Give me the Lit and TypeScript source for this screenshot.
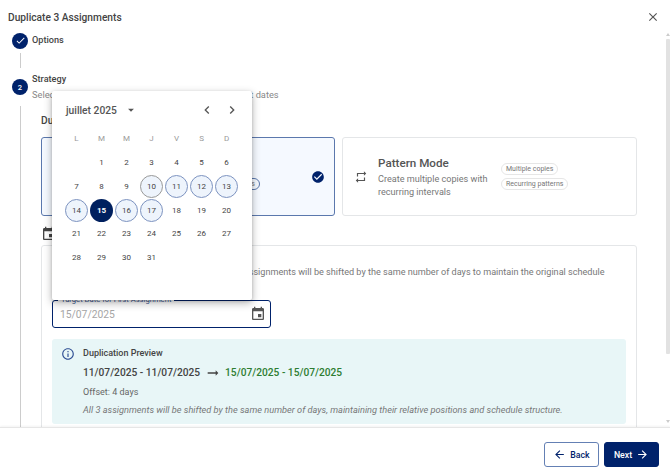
import { LitElement, html, css, svg } from "lit";
import { customElement } from "lit/decorators.js";

const P = {
  checkCircle: "M12 2C6.48 2 2 6.48 2 12s4.48 10 10 10 10-4.48 10-10S17.52 2 12 2zm-2 15-5-5 1.41-1.41L10 14.17l7.59-7.59L19 8l-9 9z",
  close: "M19 6.41 17.59 5 12 10.59 6.41 5 5 6.41 10.59 12 5 17.59 6.41 19 12 13.41 17.59 19 19 17.59 13.41 12z",
  repeat: "M7 7h10v3l4-4-4-4v3H5v6h2V7zm10 10H7v-3l-4 4 4 4v-3h12v-6h-2v4z",
  event: "M17 12h-5v5h5v-5zM16 1v2H8V1H6v2H5c-1.11 0-1.99.9-1.99 2L3 19c0 1.1.89 2 2 2h14c1.1 0 2-.9 2-2V5c0-1.1-.9-2-2-2h-1V1h-2zm3 18H5V8h14v11z",
  drop: "M7 10l5 5 5-5z",
  left: "M15.41 7.41 14 6l-6 6 6 6 1.41-1.41L10.83 12z",
  right: "M10 6 8.59 7.41 13.17 12l-4.58 4.59L10 18l6-6z",
  info: "M11 7h2v2h-2zm0 4h2v6h-2zm1-9C6.48 2 2 6.48 2 12s4.48 10 10 10 10-4.48 10-10S17.52 2 12 2zm0 18c-4.41 0-8-3.59-8-8s3.59-8 8-8 8 3.59 8 8-3.59 8-8 8z",
  back: "M20 11H7.83l5.59-5.59L12 4l-8 8 8 8 1.41-1.41L7.83 13H20v-2z",
  fwd: "M12 4l-1.41 1.41L16.17 11H4v2h12.17l-5.58 5.59L12 20l8-8z",
  alt: "M16.01 11H4v2h12.01v3L20 12l-3.99-4z",
  check: "M9 16.17 4.83 12l-1.42 1.41L9 19 21 7l-1.41-1.41z",
};

const icon = (d: string, size: number, color: string) => html`<svg
  class="ic" width=${size} height=${size} viewBox="0 0 24 24" fill=${color}>${svg`<path d=${d}></path>`}</svg>`;

const NAVY = "#00226b";
const weeks: number[][] = [
  [0, 1, 2, 3, 4, 5, 6],
  [7, 8, 9, 10, 11, 12, 13],
  [14, 15, 16, 17, 18, 19, 20],
  [21, 22, 23, 24, 25, 26, 27],
  [28, 29, 30, 31, 0, 0, 0],
];
const dayClass = (d: number) => {
  if (d === 15) return "day sel";
  if (d === 10) return "day today";
  if (d >= 11 && d <= 17) return "day range";
  return "day";
};

@customElement("app-root")
export class AppRoot extends LitElement {
  static styles = css`
    :host {
      display: flex;
      flex-direction: column;
      width: 670px;
      height: 474px;
      overflow: hidden;
      position: relative;
      background: #fff;
      font-family: Roboto, "Liberation Sans", sans-serif;
      color: #444;
    }
    .ic { display: block; flex: none; }
    .head {
      flex: none;
      height: 33px;
      display: flex;
      align-items: center;
      justify-content: space-between;
      padding: 1px 10px 0 8px;
      box-sizing: border-box;
    }
    .title { font-size: 10.2px; font-weight: 500; color: #444; }
    .main { flex: 1; min-height: 0; overflow: hidden; padding-left: 12px; padding-right: 33px; }
    .step { display: flex; gap: 4px; }
    .bubble {
      width: 16px; height: 16px; border-radius: 50%;
      background: #00226b;
      color: #fff; font-size: 7.5px; font-weight: 500;
      display: flex; align-items: center; justify-content: center;
      flex: none;
    }
    .label { font-size: 9.14px; font-weight: 500; color: #444; line-height: 14px; margin-top: -1px; }
    .step-a { height: 15px; align-items: center; }
    .line-a { width: 1px; height: 15px; background: #ccc; margin: 5px 0 5px 8px; }
    .step-b { height: 33px; position: relative; }
    .step-b .bubble { margin-top: 6px; }
    .sub { font-size: 9.25px; color: #888; line-height: 14px; margin-top: 2px; white-space: nowrap; }
    .body {
      margin-left: 8px;
      border-left: 1px solid #ccc;
      padding-left: 20px;
      padding-top: 8px;
      height: 340px;
    }
    .h3 { font-size: 10.2px; font-weight: 500; color: #444; line-height: 14px; }
    .cards {
      display: grid;
      grid-template-columns: 294px 295px;
      gap: 7px;
      margin-top: 9px;
    }
    .card {
      height: 79px;
      box-sizing: border-box;
      border: 1px solid #e4e6e8;
      border-radius: 3px;
      display: flex;
      align-items: center;
      padding: 0 11px;
      position: relative;
    }
    .card.on { background: #f5f9ff; border-color: #5b78ad; }
    .card .text { margin: 2px 0 0 10px; width: 112px; flex: none; }
    .card .name { font-size: 11.67px; font-weight: 500; color: #555; line-height: 14px; margin-bottom: 3px; }
    .card .desc { font-size: 9.1px; color: #777; line-height: 12.7px; }
    .chips { margin-left: 11px; display: flex; flex-direction: column; align-items: flex-start; gap: 3px; }
    .chip {
      font-size: 7px; color: #777; line-height: 10px;
      border: 1px solid #e6e6e6; border-radius: 6px;
      padding: 0 4px; white-space: nowrap;
    }
    .card.on .chip { border-color: #5b78ad; }
    .tick { margin-left: auto; margin-right: -2px; }
    .sec { display: flex; align-items: center; gap: 6px; margin-top: 10px; height: 15px; }
    .box {
      margin-top: 4px;
      width: 596px;
      height: 240px;
      box-sizing: border-box;
      border: 1px solid #e4e6e8;
      border-radius: 3px;
      padding: 19px 10px 0;
    }
    .note { font-size: 9.1px; color: #777; line-height: 14px; white-space: nowrap; }
    .field {
      margin-top: 21px;
      width: 219px; height: 28px;
      box-sizing: border-box;
      border: 1.5px solid #00226b;
      border-radius: 3px;
      display: flex; align-items: center; justify-content: space-between;
      padding: 0 4px 0 7px;
      position: relative;
    }
    .field .val { font-size: 10.3px; color: #a6a6a6; }
    .field .legend {
      position: absolute; left: 5px; top: -6px;
      font-size: 7.65px; line-height: 10px; color: #3a5590;
      background: #fff; padding: 0 3px;
      white-space: nowrap;
    }
    .prev {
      margin-top: 11px;
      width: 574px;
      height: 85px;
      background: #e8f6f7;
      border-radius: 3px;
      box-sizing: border-box;
      display: flex;
      padding: 7px 0 0 9px;
      gap: 8px;
    }
    .prev > .ic { margin-top: 1px; }
    .p-title { font-size: 9px; font-weight: 500; color: #444; line-height: 14px; }
    .p-dates { display: flex; align-items: center; font-size: 10.2px; font-weight: 500; color: #444; margin-top: 5px; line-height: 16px; }
    .p-dates .arr { margin: 0 4.5px; }
    .p-dates .new { color: #2e7d32; }
    .p-off { font-size: 9px; color: #666; line-height: 14px; margin-top: 4px; }
    .p-it { font-size: 9.23px; font-style: italic; color: #777; line-height: 14px; margin-top: 4px; white-space: nowrap; }
    .foot {
      flex: none;
      height: 47px;
      box-sizing: border-box;
      border-top: 1px solid #e6e6e6;
      box-shadow: 0 -1px 2px rgba(0,0,0,.05);
      background: #fff;
      position: relative;
      display: flex;
      justify-content: flex-end;
      gap: 5px;
      padding: 14px 11px 0 0;
    }
    .btn {
      height: 25px; width: 55px;
      box-sizing: border-box;
      border-radius: 3px;
      border: 1px solid #6480b4;
      font-size: 8.75px; font-weight: 500;
      display: flex; align-items: center; justify-content: center; gap: 4px;
      color: #00226b;
    }
    .btn.pri { background: #00226b; border-color: #00226b; color: #fff; }
    .bar { position: absolute; right: 0; top: 39px; width: 4px; height: 315px; background: #e2e2e2; border-radius: 1px; }
    .up, .down { position: absolute; right: 0; width: 0; height: 0; border: 2px solid transparent; }
    .up { top: 31px; border-bottom: 3px solid #ccc; }
    .down { top: 420px; border-top: 3px solid #ccc; }
    .pop {
      position: absolute; left: 52px; top: 91px;
      width: 200px; height: 209px;
      background: #fff;
      box-shadow: 0 3px 8px rgba(0,0,0,.3), 0 1px 3px rgba(0,0,0,.15);
      border-radius: 2px;
      box-sizing: border-box;
      padding: 11px 12px 0;
    }
    .pop-h { display: flex; align-items: center; height: 16px; padding-left: 2px; }
    .month { font-size: 10.25px; font-weight: 500; color: #555; }
    .drop { margin-left: 7px; }
    .navs { margin-left: auto; display: flex; gap: 9px; }
    .grid { display: grid; grid-template-columns: repeat(7, 25px); margin-top: 9px; }
    .wd { height: 22px; display: flex; align-items: center; justify-content: center; font-size: 8px; color: #999; }
    .gridd { display: grid; grid-template-columns: repeat(7, 25px); grid-auto-rows: 23.7px; margin-top: 2px; }
    .cell { display: flex; align-items: center; justify-content: center; }
    .day {
      width: 23px; height: 23px; box-sizing: border-box; border-radius: 50%;
      display: flex; align-items: center; justify-content: center;
      font-size: 8px; color: #444;
    }
    .day.range { background: #eef4fc; border: 1px solid #7d93c0; }
    .day.today { background: #eef4fc; border: 1px solid #999; }
    .day.sel { background: #00205f; color: #fff; font-weight: 700; }
  `;

  render() {
    return html`
      <div class="head">
        <div class="title">Duplicate 3 Assignments</div>
        ${icon(P.close, 14, "#555")}
      </div>
      <div class="main">
        <div class="step step-a">
          <div class="bubble">${icon(P.check, 11, "#fff")}</div>
          <div class="label">Options</div>
        </div>
        <div class="line-a"></div>
        <div class="step step-b">
          <div class="bubble">2</div>
          <div>
            <div class="label">Strategy</div>
            <div class="sub">Select a duplication strategy and configure your target dates</div>
          </div>
        </div>
        <div class="body">
          <div class="h3">Duplication Mode</div>
          <div class="cards">
            <div class="card on">
              ${icon(P.event, 16, "#555")}
              <div class="text">
                <div class="name">Date Shift Mode</div>
                <div class="desc">Move all copies by one offset in days</div>
              </div>
              <div class="chips">
                <div class="chip">Single copy</div>
                <div class="chip">Maintains gaps</div>
              </div>
              <div class="tick">${icon(P.checkCircle, 14, NAVY)}</div>
            </div>
            <div class="card">
              ${icon(P.repeat, 14, "#555")}
              <div class="text">
                <div class="name">Pattern Mode</div>
                <div class="desc">Create multiple copies with recurring intervals</div>
              </div>
              <div class="chips">
                <div class="chip">Multiple copies</div>
                <div class="chip">Recurring patterns</div>
              </div>
            </div>
          </div>
          <div class="sec">
            ${icon(P.event, 16, "#444")}
            <div class="h3">Date Shift Configuration</div>
          </div>
          <div class="box">
            <div class="note">Select the target date for the first copy here. All assignments will be shifted by the same number of days to maintain the original schedule</div>
            <div class="field">
              <span class="legend">Target Date for First Assignment</span>
              <span class="val">15/07/2025</span>
              ${icon(P.event, 16, "#555")}
            </div>
            <div class="prev">
              ${icon(P.info, 14, "#2f4f94")}
              <div>
                <div class="p-title">Duplication Preview</div>
                <div class="p-dates">
                  <span>11/07/2025 - 11/07/2025</span>
                  <span class="arr">${icon(P.alt, 16, "#444")}</span>
                  <span class="new">15/07/2025 - 15/07/2025</span>
                </div>
                <div class="p-off">Offset: 4 days</div>
                <div class="p-it">All 3 assignments will be shifted by the same number of days, maintaining their relative positions and schedule structure.</div>
              </div>
            </div>
          </div>
        </div>
      </div>
      <div class="foot">
        <div class="btn">${icon(P.back, 13, NAVY)}<span>Back</span></div>
        <div class="btn pri"><span>Next</span>${icon(P.fwd, 13, "#fff")}</div>
      </div>
      <div class="up"></div>
      <div class="bar"></div>
      <div class="down"></div>
      <div class="pop">
        <div class="pop-h">
          <span class="month">juillet 2025</span>
          <span class="drop">${icon(P.drop, 14, "#555")}</span>
          <span class="navs">
            ${icon(P.left, 16, "#555")}
            ${icon(P.right, 16, "#555")}
          </span>
        </div>
        <div class="grid">
          ${["L", "M", "M", "J", "V", "S", "D"].map((w) => html`<div class="wd">${w}</div>`)}
        </div>
        <div class="gridd">
          ${weeks.flat().map((d) => html`<div class="cell">${d ? html`<div class=${dayClass(d)}>${d}</div>` : ""}</div>`)}
        </div>
      </div>
    `;
  }
}
